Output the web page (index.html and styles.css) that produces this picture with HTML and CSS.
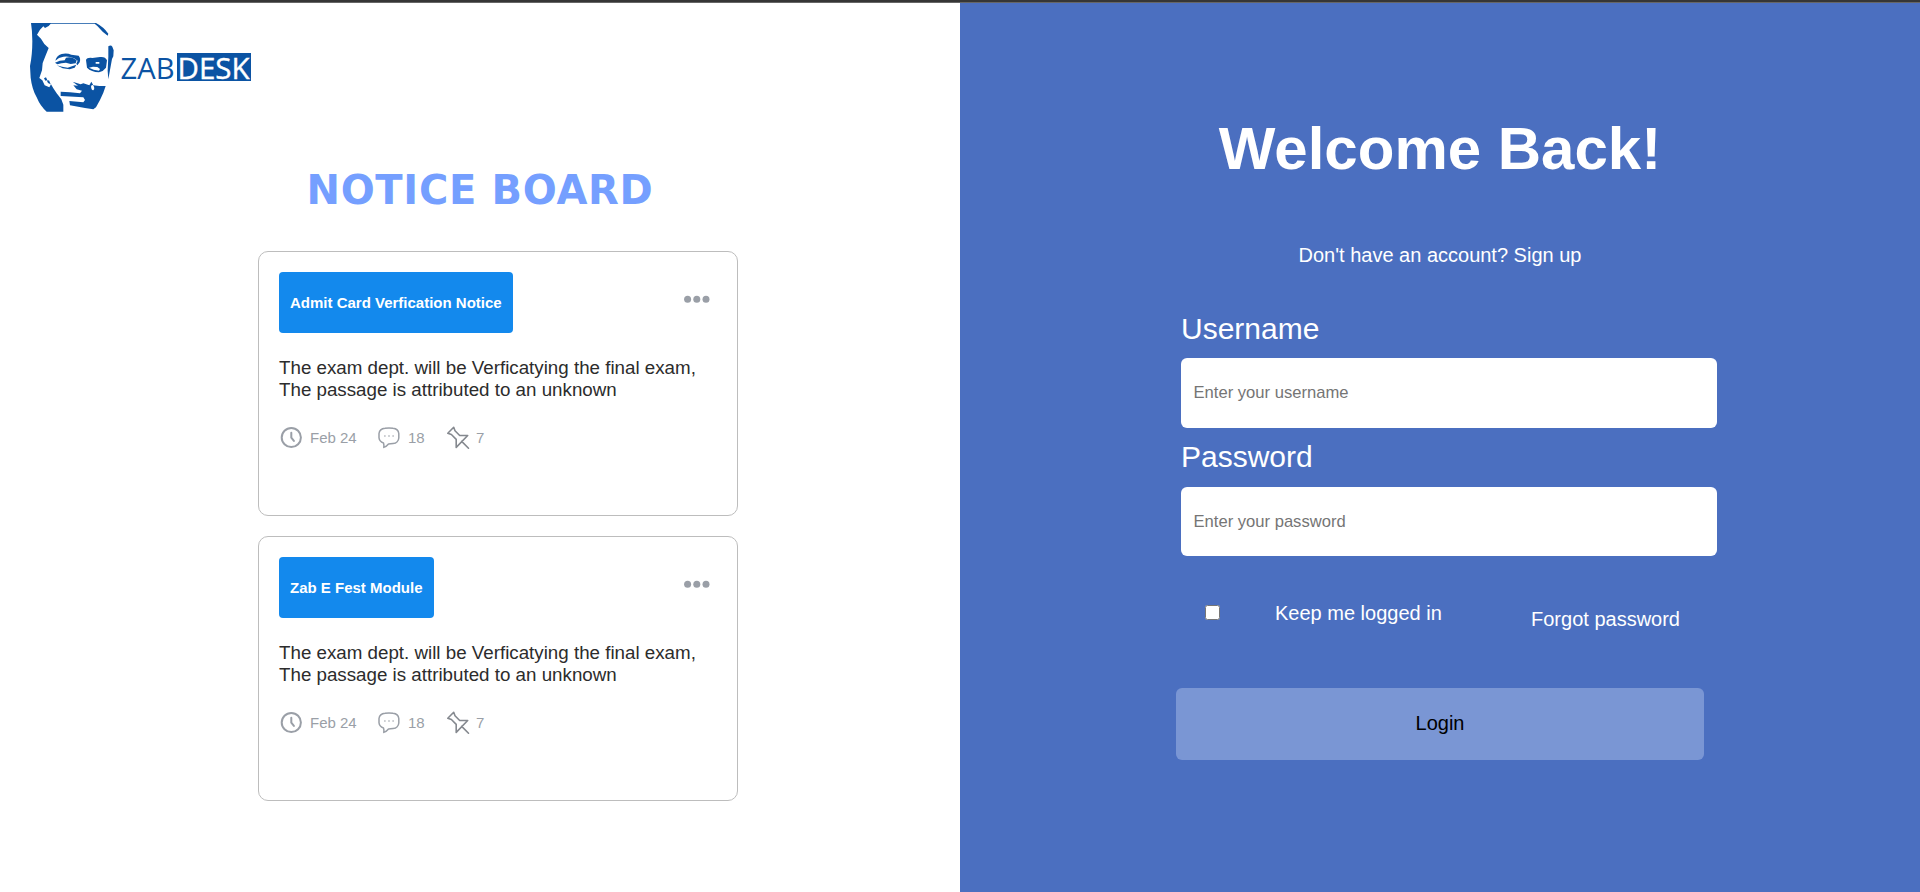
FILE: index.html
```html
<!DOCTYPE html>
<html lang="en">
<head>
<meta charset="utf-8">
<title>ZABDESK</title>
<link rel="stylesheet" href="styles.css">
</head>
<body>
<svg class="sprite" aria-hidden="true">
  <symbol id="dots" viewBox="0 0 26 8"><g fill="#9a9fa7"><circle cx="3.6" cy="4.3" r="3.5"/><circle cx="12.8" cy="4.3" r="3.5"/><circle cx="22" cy="4.3" r="3.5"/></g></symbol>
  <symbol id="clock" viewBox="0 0 24 24"><g fill="none" stroke="#9a9fa7" stroke-width="2" stroke-linecap="round" stroke-linejoin="round"><circle cx="12.300" cy="11.500" r="9.600"/><path d="M12.300 6.700v5l2.600 3.200"/></g></symbol>
  <symbol id="chat" viewBox="0 0 24 24"><path d="M8 2.200Q12 1.600 16 2.200Q21.300 2.800 21.800 7.500V12Q21.300 17 16 17.600Q13.500 18 11.500 18Q9.500 20.500 6.800 21.400Q7.200 19 6.500 17Q2.300 15.600 2 11.800V7.500Q2.600 2.800 8 2.200Z" fill="none" stroke="#9a9fa7" stroke-width="1.500" stroke-linejoin="round"/><g fill="#9a9fa7"><circle cx="7.900" cy="10" r=".8"/><circle cx="12" cy="10" r=".8"/><circle cx="16.100" cy="10" r=".8"/></g></symbol>
  <symbol id="pin" viewBox="0 0 24 24"><path d="M7.700 1.300L9 4.700L13.700 9.500H21.700L10.200 21.400V13.400L5.400 8.500L1.800 7.200ZM15.700 15.400L22.500 22.200" fill="none" stroke="#85898f" stroke-width="1.600" stroke-linejoin="round" stroke-linecap="round"/></symbol>
</svg>
<div class="topbar"></div>
<div class="page">
  <main class="board">
    <svg class="logo" viewBox="0 0 230 96" role="img" aria-label="ZABDESK">
      <g transform="scale(.333333)" fill="#0b53a3">
        <path d="M3 0H64L56 9L45 15L40 10L30 20L21 35L33 47L43 63L56 75L46 100L38 120L36 142L28 165L37 172L44 187L58 193L63 184L70 196L80 211L94 229L100 245V266H50Q31 250 20 223Q6 198 2 164L0 129Q7 96 7 54Q7 24 3 0Z"/>
        <path d="M42 166L48 163L53 173L57 172L62 184L54 180L50 172L46 173Z"/>
        <path d="M58 0H198Q221 12 235 32L233 38L218 26L202 9L194 2H64Z"/>
        <path d="M235 70Q243 65 247 71L251 82L250 100L246 108L240 141L235 169L233 143L234 122L235 101Z"/>
        <path d="M76 113Q79 98 95 93Q111 90 124 95L146 98Q153 106 149 118L142 127L139 122L143 113L132 106Q115 98 100 101Q86 103 76 113Z"/>
        <path d="M75 119Q89 112 104 112L108 104Q120 101 129 105L140 112L137 121L122 123L108 119Q94 119 82 124ZM80 127Q96 132 113 134L139 125L134 134L119 139L98 136Z"/>
        <path fill-rule="evenodd" d="M168 111Q171 103 187 105L210 102Q226 100 231 112L228 134Q220 145 207 148Q184 147 171 134ZM197 117V122H208V117ZM177 134Q190 141 207 143L210 138L202 132L189 131Z"/>
        <path d="M92 206L120 208L150 211L156 203L140 199L130 187L144 188L128 176L152 184L160 181L178 187L184 176L190 187L208 189H227L220 209L210 231L198 253L190 259L165 255L120 247L118 234L160 238L165 231L160 223L92 219Z"/>
        <ellipse cx="188" cy="194" rx="4.500" ry="8" fill="#fff" transform="rotate(-14 188 194)"/>
      </g>
      <text x="90.500" y="55.500" class="logo-zab" textLength="54" lengthAdjust="spacingAndGlyphs">ZAB</text>
      <rect x="147" y="30" width="74" height="28" fill="#0b53a3"/>
      <text x="147.500" y="55.500" class="logo-desk" textLength="72" lengthAdjust="spacingAndGlyphs">DESK</text>
    </svg>
    <h1 class="board-title">NOTICE BOARD</h1>
    <div class="cards">
      <article class="card">
        <header class="card-head"><button class="tag">Admit Card Verfication Notice</button><svg class="dots"><use href="#dots"/></svg></header>
        <p class="card-text">The exam dept. will be Verficatying the final exam,<br>The passage is attributed to an unknown</p>
        <div class="meta">
          <span class="meta-item date"><svg class="icon"><use href="#clock"/></svg>Feb 24</span>
          <span class="meta-item comments"><svg class="icon"><use href="#chat"/></svg>18</span>
          <span class="meta-item pins"><svg class="icon"><use href="#pin"/></svg>7</span>
        </div>
      </article>
      <article class="card">
        <header class="card-head"><button class="tag">Zab E Fest Module</button><svg class="dots"><use href="#dots"/></svg></header>
        <p class="card-text">The exam dept. will be Verficatying the final exam,<br>The passage is attributed to an unknown</p>
        <div class="meta">
          <span class="meta-item date"><svg class="icon"><use href="#clock"/></svg>Feb 24</span>
          <span class="meta-item comments"><svg class="icon"><use href="#chat"/></svg>18</span>
          <span class="meta-item pins"><svg class="icon"><use href="#pin"/></svg>7</span>
        </div>
      </article>
    </div>
  </main>
  <section class="login">
    <h2 class="welcome">Welcome Back!</h2>
    <p class="signup">Don't have an account? Sign up</p>
    <form class="form">
      <label class="label" for="user">Username</label>
      <input class="field" id="user" type="text" placeholder="Enter your username">
      <label class="label" for="pass">Password</label>
      <input class="field" id="pass" type="password" placeholder="Enter your password">
      <div class="options">
        <input class="check" id="keep" type="checkbox">
        <label class="keep" for="keep">Keep me logged in</label>
        <a class="forgot">Forgot password</a>
      </div>
      <button class="submit" type="button">Login</button>
    </form>
  </section>
</div>
</body>
</html>
```
FILE: styles.css
```css
* { box-sizing: border-box; }
body { margin: 0; height: 892px; overflow: hidden; background: #fff; font-family: "Liberation Sans", Arial, sans-serif; }
.sprite { display: none; }
.topbar { height: 3px; background: #363636; border-bottom: 1px solid #666; }
.page { display: grid; grid-template-columns: 1fr 1fr; height: 889px; }
.board { padding: 20px 0 0 30px; }
.logo { display: block; width: 230px; height: 96px; }
.logo-zab, .logo-desk { font-family: "Open Sans", "Noto Sans", sans-serif; font-size: 30px; }
.logo-zab { fill: #0b53a3; }
.logo-desk { fill: #fff; stroke: #fff; stroke-width: 0.4px; }
.board-title { margin: 47px 30px 0 0; height: 48px; line-height: 48px; text-align: center; font-family: Verdana, "DejaVu Sans", sans-serif; font-size: 40px; letter-spacing: 0.7px; color: #759fff; }
.cards { display: flex; flex-direction: column; gap: 20px; margin: 37px 0 0 228px; width: 480px; }
.card { height: 265px; border: 1px solid #bdbdbd; border-radius: 10px; padding: 20px; }
.card-head { display: flex; justify-content: space-between; align-items: flex-start; }
.tag { height: 61px; padding: 0 11px; border: 0; border-radius: 4px; background: #1389ed; color: #fff; font: bold 15px "Liberation Sans", Arial, sans-serif; white-space: nowrap; }
.dots { width: 26px; height: 8px; margin: 23px 7px 0 0; }
.card-text { margin: 24px 0 0; font-size: 18.75px; line-height: 22px; color: #2c2c2c; white-space: nowrap; }
.meta { display: flex; margin-top: 21px; font-size: 15px; line-height: 32px; color: #9a9fa7; }
.meta-item { display: flex; align-items: center; gap: 7px; }
.icon { width: 24px; height: 24px; flex: none; }
.date { width: 98px; }
.comments { width: 69px; }
.pins { gap: 6px; }
.login { background: #4b6fc0; color: #fff; display: flex; flex-direction: column; align-items: center; }
.welcome { margin: 112px 0 0; font-size: 60px; line-height: 68px; white-space: nowrap; }
.signup { margin: 60px 0 0; font-size: 20px; line-height: 24px; }
.form { width: 528px; margin-top: 35px; }
.label { display: block; margin-left: 5px; height: 56px; font-size: 30px; line-height: 53px; }
.field { display: block; width: 536px; height: 70px; margin-left: 5px; border: 0; border-radius: 6px; padding: 0 12.5px; background: #fff; font: 16.600px "Liberation Sans", Arial, sans-serif; }
.field + .label { height: 59px; line-height: 58px; }
.label + .field:nth-of-type(2) { height: 69px; }
.field::placeholder { color: #757575; }
.options { display: flex; align-items: flex-start; height: 132px; padding: 49px 24px 0 29px; font-size: 20px; line-height: 24px; }
.check { width: 15px; height: 15px; margin: 0; }
.keep { margin: -4px 0 0 55px; }
.forgot { margin: 2px 0 0 auto; }
.submit { display: block; width: 528px; height: 72px; border: 0; border-radius: 6px; padding: 0 0 2px; background: #7a96d4; color: #000; font: 20px "Liberation Sans", Arial, sans-serif; }
```
